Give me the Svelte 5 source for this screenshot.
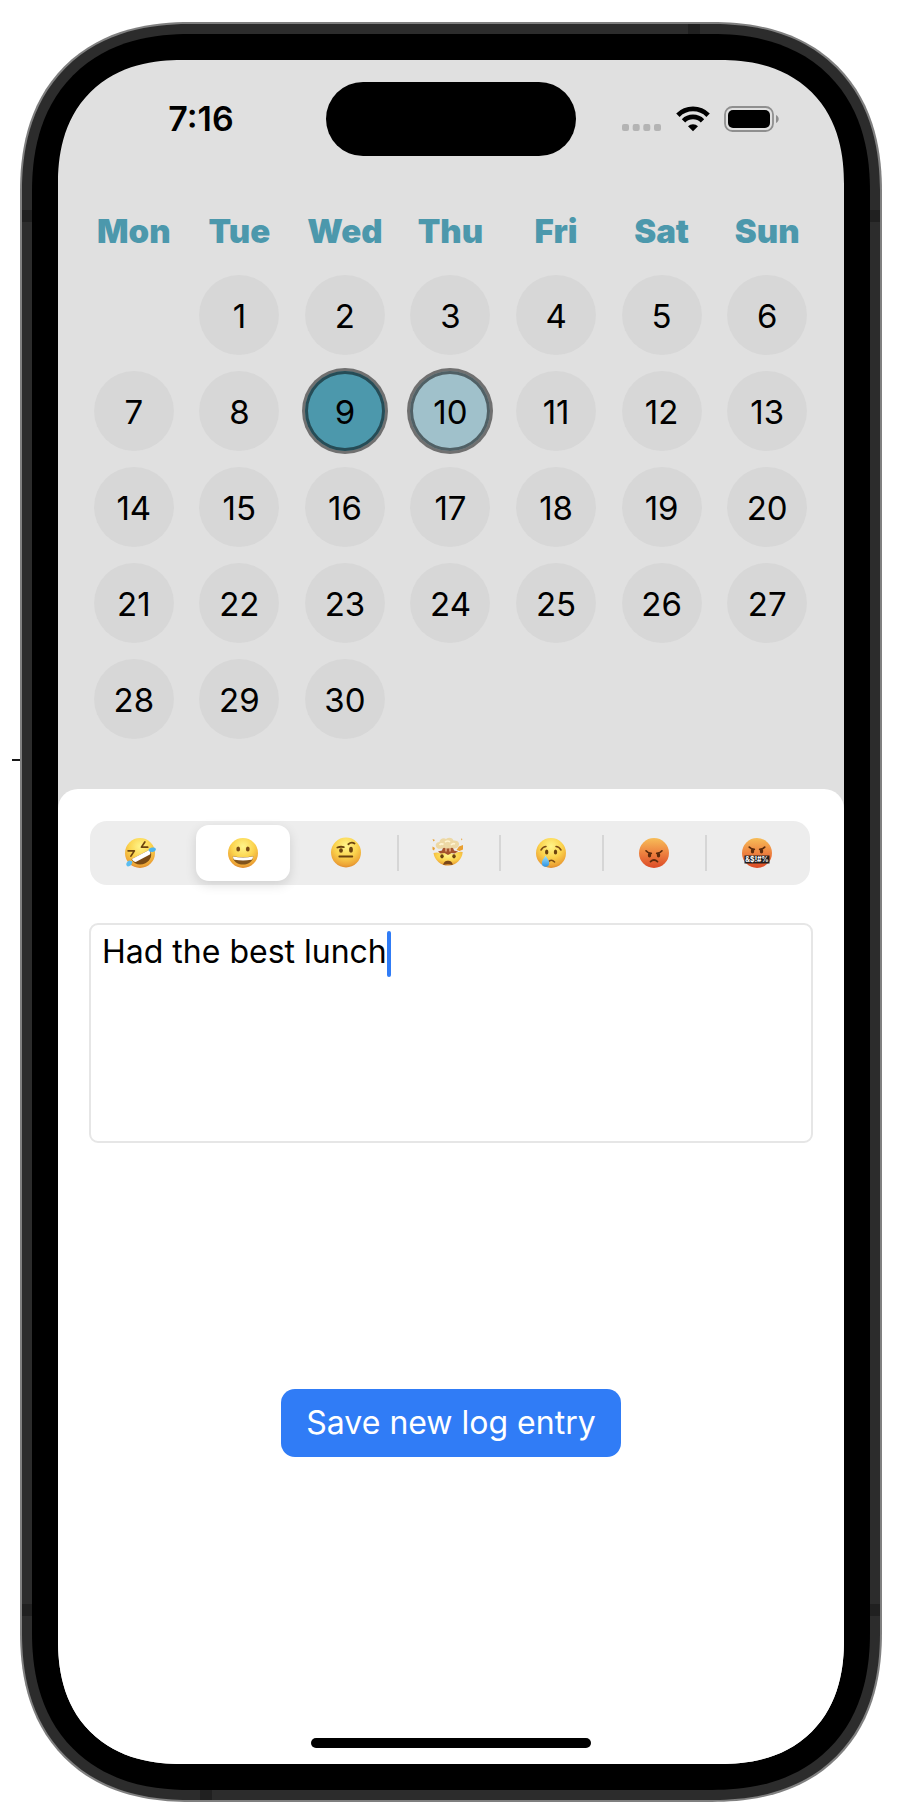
<script>
  import { onMount } from 'svelte';

  const weekdays = ['Mon', 'Tue', 'Wed', 'Thu', 'Fri', 'Sat', 'Sun'];
  const days = Array.from({ length: 30 }, (_, i) => i + 1);
  const moods = ['Laughing', 'Happy', 'Skeptical', 'Mind blown', 'Sad', 'Angry', 'Cursing'];

  let mood = $state(1);
  let entry = $state('Had the best lunch');
  let caretX = $state(0);
  let field;

  function placeCaret() {
    const ctx = document.createElement('canvas').getContext('2d');
    ctx.font = getComputedStyle(field).font;
    caretX = Math.round(ctx.measureText(entry).width);
  }

  onMount(placeCaret);
</script>

<div class="page">
  <i class="tick"></i>
  <div class="device">
    <i class="band top"></i>
    <i class="band bottom"></i>
    <i class="band left upper"></i>
    <i class="band right upper"></i>
    <i class="band left lower"></i>
    <i class="band right lower"></i>
    <div class="bezel">
      <main class="screen">
        <header class="status">
          <div class="side start"><time>7:16</time></div>
          <div class="island"></div>
          <div class="side end">
            <svg width="40" height="26" viewBox="0 0 40 26" fill="#b4b4b4" aria-label="No signal">
              <rect x="0" y="18" width="7" height="7" rx="2" />
              <rect x="10.7" y="18" width="7" height="7" rx="2" />
              <rect x="21.3" y="18" width="7" height="7" rx="2" />
              <rect x="32" y="18" width="7" height="7" rx="2" />
            </svg>
            <svg width="34" height="26" viewBox="0 0 34 26" aria-label="Wi-Fi">
              <g fill="none" stroke="#000" stroke-width="4.8">
                <path d="M1.9 9.2a21.4 21.4 0 0 1 30.2 0" />
                <path d="M7.5 14.9a13.4 13.4 0 0 1 19 0" />
              </g>
              <path d="M17 25.3l-5-5a7 7 0 0 1 10 0z" />
            </svg>
            <svg width="56" height="26" viewBox="0 0 56 26" aria-label="Battery full">
              <rect x="1" y="1" width="48" height="24" rx="7.5" fill="none" stroke="#8f8f8f" stroke-width="1.8" />
              <rect x="4" y="4" width="42" height="18" rx="5" />
              <path d="M52 9c3.6 1.4 3.6 6.6 0 8z" fill="#8f8f8f" />
            </svg>
          </div>
        </header>

        <section class="calendar" aria-label="Calendar">
          {#each weekdays as name}
            <span class="weekday">{name}</span>
          {/each}
          {#each days as day}
            <button class="day" class:first={day === 1} class:selected={day === 9} class:today={day === 10}>{day}</button>
          {/each}
        </section>

        <section class="sheet">
          <svg class="defs" width="0" height="0" aria-hidden="true">
            <defs>
              <radialGradient id="yellow" cx="50%" cy="28%" r="75%">
                <stop offset="0" stop-color="#fff58a" />
                <stop offset=".5" stop-color="#fbd34d" />
                <stop offset=".85" stop-color="#eda436" />
                <stop offset="1" stop-color="#d9822b" />
              </radialGradient>
              <linearGradient id="red" x1="0" y1="0" x2="0" y2="1">
                <stop offset="0" stop-color="#f7bd58" />
                <stop offset=".5" stop-color="#ee8240" />
                <stop offset="1" stop-color="#dc4a26" />
              </linearGradient>
              <linearGradient id="tear" x1="0" y1="0" x2="0" y2="1">
                <stop offset="0" stop-color="#a6e4fb" />
                <stop offset="1" stop-color="#2c93e2" />
              </linearGradient>
            </defs>
          </svg>

          <div class="moods" role="radiogroup" aria-label="Mood">
            {#each moods as name, i}
              <label class="mood" class:chosen={mood === i} class:divided={i > 0 && mood !== i && mood !== i - 1}>
                <input type="radio" name="mood" value={i} bind:group={mood} aria-label={name} />
                <svg width="34" height="34" viewBox="0 0 34 34">
                  {#if i === 0}
                    <circle cx="17" cy="17" r="15" fill="url(#yellow)" />
                    <g transform="rotate(-28 17 17)">
                      <path d="M6.5 18.5h21c0 6-4.5 10-10.5 10s-10.5-4-10.5-10z" fill="#7a4a14" />
                      <path d="M7 18.5h20c0 2.5-1 4-2 4.5H9c-1.2-.8-2-2.5-2-4.5z" fill="#fff" />
                      <path d="M7.5 9.5l5.500 3-5.500 3M26.500 9.500l-5.500 3 5.500 3" fill="none" stroke="#6b430f" stroke-width="1.7" stroke-linecap="round" stroke-linejoin="round" />
                    </g>
                    <path d="M25.5 13.5c2-2.5 6.5-2.6 7.3-.7.7 2.2-3 4.2-6.5 2.8z" fill="#4db5ee" />
                    <path d="M9.2 25.2c.3 3-2 5.500-4.600 5.200-2.300-.8-1.500-4.500 1.800-5.800z" fill="#5cbdf0" />
                  {:else if i === 1}
                    <circle cx="17" cy="17" r="15" fill="url(#yellow)" />
                    <ellipse cx="12.2" cy="13" rx="1.9" ry="2.5" fill="#7a4a14" />
                    <ellipse cx="21.8" cy="13" rx="1.9" ry="2.5" fill="#7a4a14" />
                    <path d="M6.8 20.2q10.2 2 20.4 0c0 5-4.5 8.3-10.2 8.3s-10.2-3.3-10.2-8.3z" fill="#80531c" />
                    <path d="M7 20.4q10 2 20 0c0 2-.8 3-1.7 3.4q-8.3 1.5-16.6 0c-1-.5-1.7-1.5-1.7-3.4z" fill="#fff" />
                  {:else if i === 2}
                    <circle cx="17" cy="16.5" r="15" fill="url(#yellow)" />
                    <ellipse cx="12" cy="14.5" rx="1.9" ry="2.3" fill="#6b430f" />
                    <ellipse cx="22" cy="13.7" rx="1.9" ry="2.9" fill="#6b430f" />
                    <path d="M8.3 11.5q3.5-1.3 6.5-.3M19.3 8.2q3.2-2.8 6.2-.7M10.3 20.5h13" fill="none" stroke="#6b430f" stroke-width="1.8" stroke-linecap="round" />
                  {:else if i === 3}
                    <path d="M2.5 17q4-1 7 .5l3.500-1 3 2 3-1.500 4 1q4-3 8.700-2a14.700 14.700 0 0 1-29.200 1z" fill="url(#yellow)" />
                    <path d="M12.500 10h9l1.500 4.500 4 1-3.500 2-3-.5-3.500 2-3.500-2-4 .5-2.500-2 4-1z" fill="#a5532d" />
                    <path d="M15 11v4.500M19 11v4.500" stroke="#e9b184" stroke-width="1.500" />
                    <path d="M6 12C3.500 9.500 5 6 8.500 6c0-3.500 4.500-4.800 6.500-3 3-2.500 7-1 7.500 1.500 4-.8 7 2.500 5 5.500-.5 2.500-4.500 3.200-6.500 1.800-3 1-6 1-8 0-2 1.200-5.500 1.500-7 .2z" fill="#edd8a4" />
                    <path d="M8.500 9q2-2 4-.5M14 6q3-2 5 0M20 9q2-2 4-1" fill="none" stroke="#fff4d2" stroke-width="1.700" />
                    <path d="M1.500 3l2.500 1-1.500 1.500zM30 2.500l1.500.5-1 1.500zM1.500 10.500l2.500 1.500-1 2.500-1.500-1zM28 10.500l4-1.500v4.500l-3.500 1.500-3-1z" fill="#e9a032" />
                    <ellipse cx="11" cy="20.300" rx="1.700" ry="2.100" fill="#6b430f" />
                    <ellipse cx="23" cy="20.300" rx="1.700" ry="2.100" fill="#6b430f" />
                    <path d="M12.300 29c0-5.800 9.400-5.800 9.400 0q-4.700-1.300-9.400 0z" fill="#7a4518" />
                  {:else if i === 4}
                    <circle cx="17" cy="17" r="15" fill="url(#yellow)" />
                    <ellipse cx="12.7" cy="16" rx="1.7" ry="2.5" fill="#6b430f" />
                    <ellipse cx="21.5" cy="16" rx="1.7" ry="2.5" fill="#6b430f" />
                    <path d="M7 14q2-3.3 5-3.500M27 14q-2-3.300-5-3.500M14 26q3.300-3.600 6.600 0" fill="none" stroke="#7a4a14" stroke-width="1.5" stroke-linecap="round" />
                    <path d="M11.5 19.5c2 3.2 3.7 5.2 3.7 7.6a3.7 3.7 0 0 1-7.4 0c0-2.4 2-4.4 3.7-7.6z" fill="url(#tear)" />
                  {:else if i === 5}
                    <circle cx="17" cy="17" r="15" fill="url(#red)" />
                    <ellipse cx="12.5" cy="19" rx="1.7" ry="2.5" fill="#5b2a0c" />
                    <ellipse cx="21.5" cy="19" rx="1.7" ry="2.5" fill="#5b2a0c" />
                    <path d="M9 14.8q2 2.5 5.300 2.600M25 14.800q-2 2.500-5.300 2.600M13.500 25.700q3.500-3.400 7 0" fill="none" stroke="#5b2a0c" stroke-width="1.7" stroke-linecap="round" />
                  {:else}
                    <circle cx="17" cy="17" r="15" fill="url(#red)" />
                    <ellipse cx="12.5" cy="15" rx="1.7" ry="2.5" fill="#5b2a0c" />
                    <ellipse cx="21.5" cy="15" rx="1.7" ry="2.5" fill="#5b2a0c" />
                    <path d="M9.3 11.2q2 2 5 2.200M24.700 11.200q-2 2-5 2.200" fill="none" stroke="#5b2a0c" stroke-width="1.7" stroke-linecap="round" />
                    <rect x="4.5" y="19.5" width="25" height="8" fill="#232021" />
                    <text x="17" y="26" text-anchor="middle" font-size="7" font-weight="700" fill="#fff">&amp;$!#%</text>
                  {/if}
                </svg>
              </label>
            {/each}
          </div>

          <div class="note">
            <textarea bind:this={field} bind:value={entry} oninput={placeCaret} aria-label="Log entry" spellcheck="false"></textarea>
            <i class="caret" style:left="{caretX}px"></i>
          </div>

          <button class="save">Save new log entry</button>
          <div class="home"></div>
        </section>
      </main>
    </div>
  </div>
</div>

<style>
  :global(body) {
    margin: 0;
    background: #fff;
  }

  .page {
    position: relative;
    box-sizing: border-box;
    display: flex;
    min-height: 100vh;
    padding: 22px 22px 18px 20px;
    font-family: Inter, 'Liberation Sans', sans-serif;
    font-size: 33px;
    line-height: 40px;
    color: #000;
  }

  button,
  textarea {
    font: inherit;
    color: inherit;
    margin: 0;
  }

  .tick {
    position: absolute;
    left: 12px;
    top: 759px;
    width: 8px;
    height: 2px;
    background: #1a1a1a;
  }

  .device {
    position: relative;
    flex: 1;
    min-width: 0;
    display: flex;
    padding: 10px;
    border: 2px solid #808080;
    border-radius: 148px;
    background: #2c2c2c;
  }

  .bezel {
    flex: 1;
    min-width: 0;
    display: flex;
    padding: 26px;
    border-radius: 136px;
    background: #000;
  }

  .screen {
    flex: 1;
    min-width: 0;
    display: flex;
    flex-direction: column;
    border-radius: 109px;
    background: #e0e0e0;
    overflow: hidden;
  }

  /* Continuous corners where the browser can draw them */
  @supports (corner-shape: superellipse(1.2)) {
    .device,
    .bezel,
    .screen {
      corner-shape: superellipse(1.2);
    }

    .device { border-radius: 170px; }
    .bezel { border-radius: 158px; }
    .screen { border-radius: 124px; }
  }

  .band {
    position: absolute;
    background: #202020;
  }

  .top,
  .bottom {
    width: 12px;
    height: 10px;
  }

  .left,
  .right {
    width: 10px;
    height: 12px;
  }

  .top { top: 0; right: 180px; }
  .bottom { bottom: 0; left: 178px; }
  .left { left: 0; }
  .right { right: 0; }
  .upper { top: 186px; }
  .lower { bottom: 184px; }

  .status {
    display: grid;
    grid-template-columns: 1fr 250px 1fr;
    padding: 22px 18px 0;
  }

  .side {
    display: flex;
    align-items: center;
    justify-content: center;
    height: 74px;
  }

  .end {
    gap: 14px;
  }

  .side time {
    font-size: 34px;
    font-weight: 600;
  }

  .island {
    height: 74px;
    border-radius: 37px;
    background: #000;
  }

  .calendar {
    display: grid;
    grid-template-columns: repeat(7, 1fr);
    justify-items: center;
    row-gap: 16px;
    padding: 55px 24px 50px 23px;
  }

  .weekday {
    margin-bottom: 8px;
    font-weight: 900;
    color: #4c98ac;
  }

  .day {
    width: 80px;
    height: 80px;
    padding: 1px 0 0;
    border: 0;
    border-radius: 50%;
    background: #d7d7d7;
  }

  .first {
    grid-column-start: 2;
  }

  .selected,
  .today {
    box-shadow: 0 0 0 3px rgba(0, 0, 0, .5), inset 0 0 0 3px rgba(0, 0, 0, .5);
  }

  .selected { background: #4c98ac; }
  .today { background: #a0c1cb; }

  .sheet {
    flex: 1;
    display: flex;
    flex-direction: column;
    padding: 32px 31px 16px;
    border-radius: 20px 20px 0 0;
    background: #fff;
  }

  .defs {
    position: absolute;
  }

  .moods {
    display: grid;
    grid-template-columns: repeat(7, 1fr);
    height: 64px;
    margin: 0 3px 0 1px;
    border-radius: 17px;
    background: #ededed;
  }

  .mood {
    position: relative;
    display: grid;
    place-items: center;
    margin: 4px 6px 4px 3px;
    border-radius: 13px;
  }

  .mood input {
    position: absolute;
    opacity: 0;
  }

  .chosen {
    background: #fff;
    box-shadow: 0 4px 12px rgba(0, 0, 0, .12);
  }

  .divided::before {
    content: '';
    position: absolute;
    left: -5px;
    top: 10px;
    width: 2px;
    height: 36px;
    background: #d6d6d6;
  }

  .note {
    position: relative;
    display: flex;
    margin-top: 38px;
    font-size: 32px;
  }

  textarea {
    flex: 1;
    box-sizing: border-box;
    min-width: 0;
    height: 220px;
    padding: 7px 11px;
    border: 2px solid #e6e6e6;
    border-radius: 9px;
    outline: 0;
    background: #fff;
    resize: none;
  }

  .caret {
    position: absolute;
    top: 8px;
    width: 4px;
    height: 46px;
    margin-left: 13px;
    border-radius: 2px;
    background: #307cf6;
  }

  .save {
    align-self: center;
    margin-top: 246px;
    padding: 14px 25px;
    border: 0;
    border-radius: 14px;
    background: #307cf6;
    color: #fff;
    font-size: 32px;
  }

  .home {
    align-self: center;
    width: 280px;
    height: 10px;
    margin-top: auto;
    border-radius: 5px;
    background: #000;
  }
</style>
